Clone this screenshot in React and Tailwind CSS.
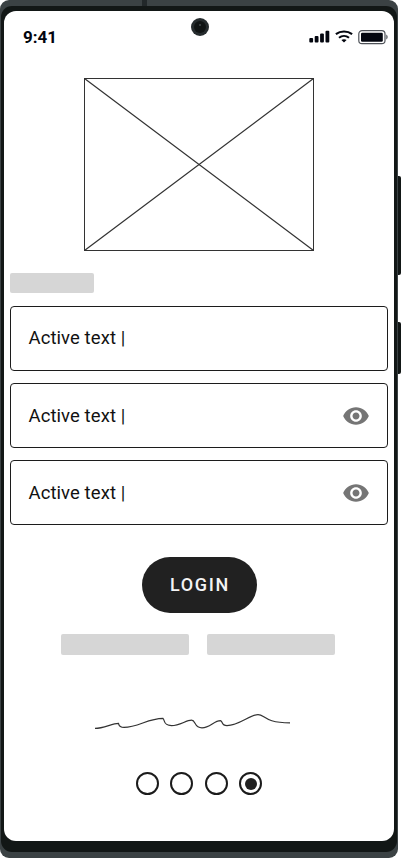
const EyeIcon = () => (
  <svg className="h-[28px] w-[28px] fill-[#757575]" viewBox="0 0 24 24">
    <path d="M12 4.5C7 4.5 2.73 7.61 1 12c1.73 4.39 6 7.5 11 7.5s9.27-3.11 11-7.5c-1.73-4.39-6-7.5-11-7.5zM12 17c-2.76 0-5-2.24-5-5s2.24-5 5-5 5 2.24 5 5-2.24 5-5 5zm0-8c-1.66 0-3 1.34-3 3s1.34 3 3 3 3-1.34 3-3-1.34-3-3-3z" />
  </svg>
);

const Field = ({ secure }) => (
  <div className="flex h-[65px] items-center justify-between rounded-[4px] border border-[#1c1c1c] pr-[17px] pl-[17.5px]">
    <span className={`text-[18.5px] leading-6 tracking-[0.08px] text-[#111] ${secure ? "" : "pb-px"}`}>Active text |</span>
    {secure && <EyeIcon />}
  </div>
);

const StatusBar = () => (
  <header className="flex h-[52px] items-center justify-between pr-[5px] pl-[19px]">
    <span className="text-[17px] leading-5 font-bold text-[#03060f]">9:41</span>
    <svg className="h-[16px] w-[80px]" viewBox="0 0 80 16">
      <g fill="#03060f">
        <rect x="0.3" y="9" width="3.8" height="4.5" rx="1" />
        <rect x="5.7" y="7" width="3.8" height="6.5" rx="1" />
        <rect x="11.1" y="4.4" width="3.8" height="9.1" rx="1" />
        <rect x="16.5" y="1.8" width="3.8" height="11.7" rx="1" />
        <path d="M35 10.2c1 0 1.9.35 2.6.9L35 13.5l-2.6-2.4c.7-.55 1.6-.9 2.6-.9z" />
        <rect x="52" y="3.8" width="21.8" height="9" rx="1.2" />
      </g>
      <g fill="none" stroke="#03060f" strokeWidth="2.1">
        <path d="M26.9 5.2c4.7-3.6 11.5-3.6 16.2 0" />
        <path d="M30 8.7c2.9-2.3 7.1-2.3 10 0" />
      </g>
      <rect x="49.8" y="1.7" width="26.2" height="13" rx="3.2" fill="none" stroke="#4e5258" strokeWidth="1.2" />
      <path d="M77.2 5.6c2 .8 2 4.2 0 5z" fill="#65696e" />
    </svg>
  </header>
);

const Radio = ({ checked }) => (
  <span className="flex h-[23px] w-[23px] items-center justify-center rounded-full border-2 border-[#1b1b1b]">
    {checked && <span className="h-[12px] w-[12px] rounded-full bg-[#212121]" />}
  </span>
);

export default function App() {
  return (
    <div className="flex h-[858px] w-[401px] overflow-hidden bg-white font-[Roboto,sans-serif]">
      <div className="relative h-[858px] w-[398px] rounded-[9px] bg-[#3b4244] px-px pt-[6px] pb-[6px]">
        <span className="absolute top-0 left-[142px] h-[6px] w-[5px] bg-[#22282a]" />
        <div className="h-[846px] rounded-[11px] bg-[#121716] px-[3px] pt-[5px]">
          <main className="relative flex h-[830px] w-[390px] flex-col rounded-[12px] bg-white">
            <StatusBar />
            <span className="absolute top-[7px] left-[187px] flex h-[18px] w-[18px] items-center justify-center rounded-full bg-[#262c2e]">
              <span className="flex h-[12px] w-[12px] justify-center rounded-full bg-[#101414] pt-[3px]">
                <span className="h-[2px] w-[2px] rounded-full bg-[#454b4c]" />
              </span>
            </span>

            <svg className="mt-[15px] ml-[80px] h-[173px] w-[231px] shrink-0" viewBox="0 0 231 173" fill="none" stroke="#333" strokeWidth="1">
              <rect x="0.5" y="0.5" width="229" height="172" />
              <path d="M.5.5l229 172M229.5.5L.5 172.5" strokeWidth="1.2" />
            </svg>

            <div className="mt-[22px] ml-[6px] h-[20px] w-[84px] rounded-[2px] bg-[#d6d6d6]" />

            <div className="mt-[13px] flex flex-col gap-[12.2px] px-[6px]">
              <Field />
              <Field secure />
              <Field secure />
            </div>

            <button className="mt-[32px] ml-[138px] h-[56px] w-[115px] rounded-full bg-[#212121] pb-[2px] pl-px text-[18px] font-medium tracking-[1.7px] text-[#f4f4f4]">
              LOGIN
            </button>

            <div className="mt-[21px] ml-[56.5px] flex gap-[18.5px]">
              <div className="h-[21px] w-[128px] rounded-[2px] bg-[#d6d6d6]" />
              <div className="h-[21px] w-[128px] rounded-[2px] bg-[#d6d6d6]" />
            </div>

            <svg className="mt-[55px] ml-[86px] h-[24px] w-[205px] shrink-0" viewBox="90 710 205 24" fill="none" stroke="#333" strokeWidth="1.2">
              <path d="M95 728.4C104 728.4 112 723.4 118.5 723.4C119 724.5 118.5 727.4 124 727.4C138 727.4 148 718.4 163 718.4C165 720 163 725.6 171.5 725.6C180 725.6 186 720.2 191.5 720.2C196 720.2 194 727.8 202 727.8C210 727.8 214 720.6 220.5 720.6C223 721 221 725.6 227 725.6C239 725.6 250 714.6 258 714.6C265 714.6 264 722.8 290 722.8" />
            </svg>

            <div className="mt-[37.7px] ml-[131.5px] flex gap-[11.6px]">
              <Radio />
              <Radio />
              <Radio />
              <Radio checked />
            </div>
          </main>
        </div>
      </div>
      <div className="flex w-[3px] flex-col pt-[176px]">
        <span className="h-[99px] rounded-r-[2px] bg-[#121716]" />
        <span className="mt-[47px] h-[52px] rounded-r-[2px] bg-[#121716]" />
      </div>
    </div>
  );
}
